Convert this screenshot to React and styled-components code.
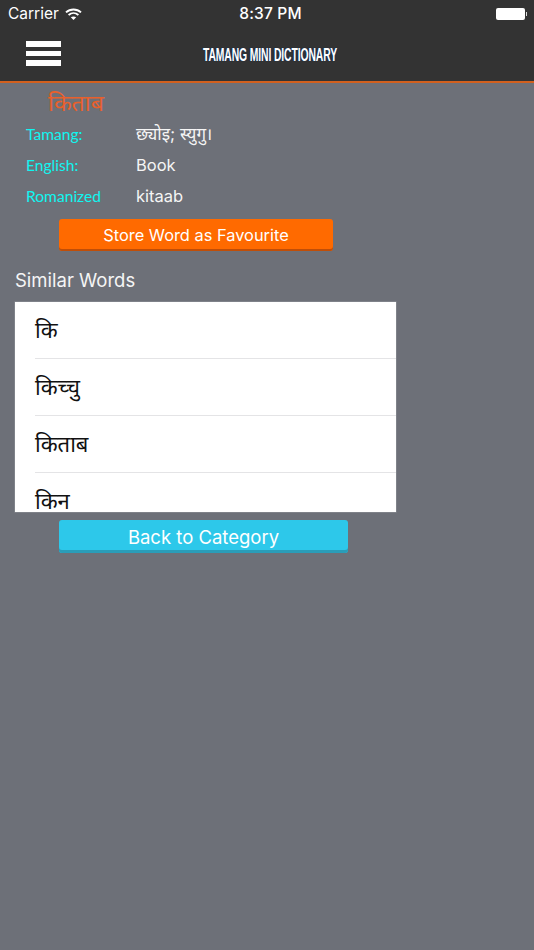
import React from 'react'
import styled, { createGlobalStyle } from 'styled-components'

const SANS = `Inter, "Open Sans", "Noto Sans", sans-serif`

const GlobalStyle = createGlobalStyle`
  html, body {
    margin: 0;
    padding: 0;
    background: #6d7078;
  }
  * { box-sizing: border-box; }
`

const similarWords = ['कि', 'किच्चु', 'किताब', 'किन']

const details = [
  { label: 'Tamang:', value: 'छ्योइ; स्युगु।', size: 17 },
  { label: 'English:', value: 'Book', size: 16.5 },
  { label: 'Romanized', value: 'kitaab', size: 16.5 },
]

function WifiIcon() {
  return (
    <svg width="17" height="12" viewBox="0 0 17 12" fill="none" stroke="#fff" strokeWidth="1.9">
      <path d="M1 4.4C5.2.5 11.8.5 16 4.4" />
      <path d="M3.6 7c2.9-2.5 6.9-2.5 9.8 0" />
      <path d="M8.5 12 5.8 9.3c1.5-1.2 3.9-1.2 5.4 0z" fill="#fff" stroke="none" />
    </svg>
  )
}

export default function App() {
  return (
    <Screen>
      <GlobalStyle />
      <Header>
        <StatusBar>
          <Carrier>
            Carrier
            <WifiIcon />
          </Carrier>
          <Clock>8:37 PM</Clock>
          <Battery>
            <BatteryBody />
            <BatteryTip />
          </Battery>
        </StatusBar>
        <NavBar>
          <Burger>
            <BurgerLine />
            <BurgerLine />
            <BurgerLine />
          </Burger>
          <AppTitle>TAMANG MINI DICTIONARY</AppTitle>
        </NavBar>
      </Header>

      <Content>
        <Word>किताब</Word>
        <DetailList>
          {details.map((item) => (
            <DetailRow key={item.label}>
              <DetailLabel>{item.label}</DetailLabel>
              <DetailValue $size={item.size}>{item.value}</DetailValue>
            </DetailRow>
          ))}
        </DetailList>
        <FavouriteButton>Store Word as Favourite</FavouriteButton>
        <SectionTitle>Similar Words</SectionTitle>
        <WordList>
          {similarWords.map((word) => (
            <WordRow key={word}>
              <WordText>{word}</WordText>
            </WordRow>
          ))}
        </WordList>
        <BackButton>Back to Category</BackButton>
      </Content>
    </Screen>
  )
}

const Screen = styled.div`
  width: 534px;
  height: 950px;
  overflow: hidden;
  background: #6d7078;
  font-family: ${SANS};
`

const Header = styled.header`
  height: 83px;
  background: #333333;
  border-bottom: 2px solid #d2601e;
`

const StatusBar = styled.div`
  height: 27px;
  padding: 0 7px 0 8px;
  display: flex;
  align-items: center;
  justify-content: space-between;
  color: #fff;
  font-size: 15.5px;
`

const Carrier = styled.div`
  width: 180px;
  display: flex;
  align-items: center;
  gap: 6px;
`

const Clock = styled.div`
  font-weight: 500;
  letter-spacing: 0.2px;
  margin-left: 6px;
`

const Battery = styled.div`
  width: 180px;
  display: flex;
  align-items: center;
  justify-content: flex-end;
`

const BatteryBody = styled.div`
  width: 29px;
  height: 12px;
  background: #fff;
  border-radius: 2px;
`

const BatteryTip = styled.div`
  width: 1.5px;
  height: 4px;
  margin-left: 1px;
  background: #ddd;
`

const NavBar = styled.div`
  height: 54px;
  padding: 14px 0 0 26px;
  display: flex;
  align-items: flex-start;
`

const Burger = styled.div`
  width: 35px;
  display: flex;
  flex-direction: column;
  gap: 4px;
`

const BurgerLine = styled.span`
  display: block;
  height: 5.5px;
  background: #fff;
`

const AppTitle = styled.h1`
  margin: 4px 0 0 142px;
  font-family: "Liberation Sans", sans-serif;
  font-size: 19px;
  font-weight: 700;
  line-height: 20px;
  letter-spacing: -0.2px;
  color: #fff;
  white-space: nowrap;
  text-shadow: 1px 0 1px #12305c, -1px 0 1px #12305c;
  transform: scaleX(0.545);
  transform-origin: left center;
`

const Content = styled.main`
  display: flex;
  flex-direction: column;
  align-items: flex-start;
`

const Word = styled.div`
  height: 24px;
  margin: 10px 0 0 48px;
  font-family: "Noto Sans Devanagari", "Noto Sans", sans-serif;
  font-size: 23px;
  line-height: 24px;
  color: #e8602c;
`

const DetailList = styled.div`
  display: flex;
  flex-direction: column;
  margin-top: 1px;
`

const DetailRow = styled.div`
  height: 31px;
  padding-left: 26px;
  display: flex;
  align-items: center;
`

const DetailLabel = styled.span`
  width: 110px;
  font-family: Lato, sans-serif;
  font-size: 15.6px;
  color: #10f5f0;
`

const DetailValue = styled.span`
  font-size: ${(props) => props.$size}px;
  color: #f5f5f5;
`

const ActionButton = styled.button`
  margin: 0 0 0 59px;
  padding: 0;
  border: none;
  border-radius: 3px;
  color: #fff;
  font-family: ${SANS};
  text-align: center;
`

const FavouriteButton = styled(ActionButton)`
  width: 274px;
  height: 32px;
  margin-top: 8px;
  background: #ff6a00;
  box-shadow: inset 0 -2px 0 #c04e08;
  font-size: 16.4px;
`

const SectionTitle = styled.h2`
  margin: 17px 0 0 15px;
  height: 24px;
  font-size: 18.5px;
  font-weight: 400;
  line-height: 24px;
  color: #f5f5f5;
`

const WordList = styled.div`
  width: 381px;
  height: 210px;
  margin: 10px 0 0 15px;
  overflow: hidden;
  background: #fff;
  box-shadow: 0 0 0 0.5px rgba(255, 255, 255, 0.25);
`

const WordRow = styled.div`
  height: 57px;
  margin-left: 20px;
  padding-top: 4px;
  display: flex;
  align-items: center;
  border-bottom: 1px solid #e4e4e6;
`

const WordText = styled.span`
  font-family: "Noto Sans Devanagari", "Noto Sans", sans-serif;
  font-size: 22px;
  color: #111;
`

const BackButton = styled(ActionButton)`
  width: 289px;
  height: 33px;
  margin-top: 8px;
  background: #2dc8ea;
  box-shadow: inset 0 -3px 0 #2a9db8;
  font-size: 18.5px;
`
